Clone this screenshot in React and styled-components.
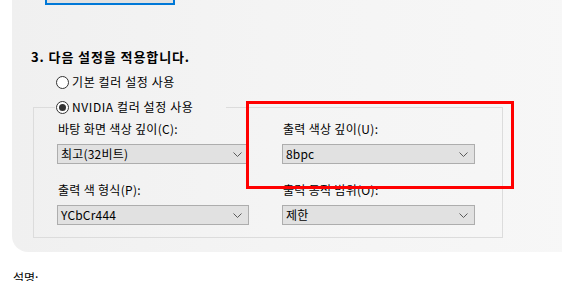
import React from "react";
import styled, { createGlobalStyle } from "styled-components";

const Global = createGlobalStyle`
  html, body { margin: 0; padding: 0; background: #ffffff; overflow: hidden; }
  body { font-family: "Noto Sans CJK KR", "Noto Sans", sans-serif; font-size: 12px; color: #000; }
`;

const Page = styled.div`
  position: relative;
  width: 562px;
  height: 281px;
  overflow: hidden;
`;

const Panel = styled.div`
  margin-left: 12px;
  width: 570px;
  padding: 0 0 14px 21px;
  box-sizing: border-box;
  background: linear-gradient(to right, #f0f0f0 0%, #f4f4f4 45%, #f7f7f7 100%);
  border-bottom-left-radius: 16px;
  display: flex;
  flex-direction: column;
`;

const TopButton = styled.div`
  margin-top: -20px;
  margin-left: 12px;
  width: 130px;
  height: 25px;
  box-sizing: border-box;
  border: 2px solid #0078d7;
  background: #e1e1e1;
`;

const Heading = styled.div`
  margin-top: 44px;
  margin-left: -2px;
  font-weight: 700;
  font-size: 13px;
  letter-spacing: 0.9px;
  line-height: 16px;
  height: 16px;
  white-space: nowrap;
`;

const RadioRow = styled.label`
  display: flex;
  align-items: center;
  gap: 3px;
  height: 16px;
  line-height: 16px;
  font-size: 12px;
  letter-spacing: 0.6px;
  white-space: nowrap;
`;

const OuterRadio = styled(RadioRow)`
  margin-top: 9px;
  margin-left: 23px;
`;

const Circle = styled.span`
  width: 13px;
  height: 13px;
  box-sizing: border-box;
  border-radius: 50%;
  border: 1px solid #333333;
  background: #ffffff;
  display: flex;
  align-items: center;
  justify-content: center;
  flex: none;
  &::after {
    content: "";
    width: 7px;
    height: 7px;
    border-radius: 50%;
    background: ${(p) => (p.$checked ? "#333333" : "transparent")};
  }
`;

const Group = styled.fieldset`
  margin: 9px 0 0 0;
  width: 470px;
  box-sizing: border-box;
  border: 1px solid #dcdcdc;
  padding: 6px 0 12px 23px;
  min-width: 0;
`;

const Legend = styled.legend`
  margin-left: -2px;
  padding: 0 1px;
  width: 171px;
  box-sizing: border-box;
`;

const Grid = styled.div`
  display: grid;
  grid-template-columns: 192px 193px;
  column-gap: 33px;
  row-gap: 18px;
`;

const Field = styled.div`
  display: flex;
  flex-direction: column;
  gap: 7px;
`;

const Label = styled.div`
  padding-left: 1px;
  height: 16px;
  line-height: 16px;
  letter-spacing: 0.3px;
  white-space: nowrap;
`;

const Select = styled.div`
  height: 20px;
  box-sizing: border-box;
  border: 1px solid #adadad;
  background: #e1e1e1;
  display: flex;
  align-items: center;
  justify-content: space-between;
  padding: 0 6px 0 3px;
  line-height: 18px;
  font-size: 12px;
  letter-spacing: 0.2px;
`;

const Note = styled.div`
  margin-top: 18px;
  margin-left: 13px;
  height: 16px;
  line-height: 16px;
  font-size: 12px;
`;

const Highlight = styled.div`
  position: absolute;
  left: 246px;
  top: 101px;
  width: 268px;
  height: 88px;
  box-sizing: border-box;
  border: 3px solid #ff0000;
  pointer-events: none;
`;

const Chevron = () => (
  <svg width="9" height="5" viewBox="0 0 9 5">
    <polyline points="0.5,0.5 4.5,4.5 8.5,0.5" fill="none" stroke="#5a5a5a" strokeWidth="1" />
  </svg>
);

const Dropdown = ({ value }) => (
  <Select>
    <span>{value}</span>
    <Chevron />
  </Select>
);

export default function App() {
  return (
    <Page>
      <Global />
      <Panel>
        <TopButton />
        <Heading>3. 다음 설정을 적용합니다.</Heading>
        <OuterRadio>
          <Circle />
          기본 컬러 설정 사용
        </OuterRadio>
        <Group>
          <Legend>
            <RadioRow>
              <Circle $checked />
              NVIDIA 컬러 설정 사용
            </RadioRow>
          </Legend>
          <Grid>
            <Field>
              <Label>바탕 화면 색상 깊이(C):</Label>
              <Dropdown value="최고(32비트)" />
            </Field>
            <Field>
              <Label>출력 색상 깊이(U):</Label>
              <Dropdown value="8bpc" />
            </Field>
            <Field>
              <Label>출력 색 형식(P):</Label>
              <Dropdown value="YCbCr444" />
            </Field>
            <Field>
              <Label>출력 동적 범위(O):</Label>
              <Dropdown value="제한" />
            </Field>
          </Grid>
        </Group>
      </Panel>
      <Note>설명:</Note>
      <Highlight />
    </Page>
  );
}
